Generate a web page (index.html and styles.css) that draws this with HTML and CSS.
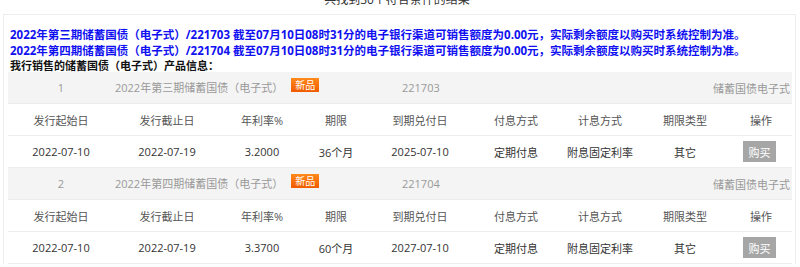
FILE: index.html
```html
<!DOCTYPE html>
<html lang="zh-CN">
<head>
<meta charset="utf-8">
<link rel="stylesheet" href="styles.css">
</head>
<body>
<div class="result-count">共找到30个符合条件的结果</div>
<div class="panel">
  <p class="notice">2022年第三期储蓄国债（电子式）/221703 截至07月10日08时31分的电子银行渠道可销售额度为0.00元，实际剩余额度以购买时系统控制为准。</p>
  <p class="notice">2022年第四期储蓄国债（电子式）/221704 截至07月10日08时31分的电子银行渠道可销售额度为0.00元，实际剩余额度以购买时系统控制为准。</p>
  <p class="title">我行销售的储蓄国债（电子式）产品信息：</p>

  <div class="product">
    <div class="prod-head">
      <span class="c-no">1</span>
      <span class="c-name">2022年第三期储蓄国债（电子式）<span class="badge">新品</span></span>
      <span class="c-code">221703</span>
      <span class="c-type">储蓄国债电子式</span>
    </div>
    <div class="row th">
      <span>发行起始日</span><span>发行截止日</span><span>年利率%</span><span>期限</span><span>到期兑付日</span><span>付息方式</span><span>计息方式</span><span>期限类型</span><span>操作</span>
    </div>
    <div class="row td">
      <span>2022-07-10</span><span>2022-07-19</span><span>3.2000</span><span>36个月</span><span>2025-07-10</span><span>定期付息</span><span>附息固定利率</span><span>其它</span><span><button class="buy" type="button">购买</button></span>
    </div>
  </div>

  <div class="product">
    <div class="prod-head">
      <span class="c-no">2</span>
      <span class="c-name">2022年第四期储蓄国债（电子式）<span class="badge">新品</span></span>
      <span class="c-code">221704</span>
      <span class="c-type">储蓄国债电子式</span>
    </div>
    <div class="row th">
      <span>发行起始日</span><span>发行截止日</span><span>年利率%</span><span>期限</span><span>到期兑付日</span><span>付息方式</span><span>计息方式</span><span>期限类型</span><span>操作</span>
    </div>
    <div class="row td">
      <span>2022-07-10</span><span>2022-07-19</span><span>3.3700</span><span>60个月</span><span>2027-07-10</span><span>定期付息</span><span>附息固定利率</span><span>其它</span><span><button class="buy" type="button">购买</button></span>
    </div>
  </div>
</div>
</body>
</html>
```

FILE: styles.css
```css
html, body {
  margin: 0;
  padding: 0;
  background: #fff;
}
body {
  font-family: "Open Sans", "Noto Sans CJK SC", sans-serif;
  font-size: 11px;
  color: #333;
  overflow: hidden;
}
.result-count {
  text-align: center;
  height: 14px;
  line-height: 12px;
  margin-top: -6px;
  margin-bottom: 6px;
  font-size: 12px;
  color: #333;
  padding-right: 6px;
}
.panel {
  margin-left: 3px;
  width: 793px;
  border: 1px solid #ededed;
  border-bottom: none;
  padding: 12px 3px 0 4px;
  box-sizing: border-box;
}
.notice {
  margin: 0;
  padding-left: 2px;
  font-weight: bold;
  font-size: 11.5px;
  color: #1010f0;
  line-height: 16px;
  white-space: nowrap;
}
.title {
  margin: 0;
  padding-left: 2px;
  font-weight: bold;
  color: #111;
  line-height: 13px;
}
.prod-head {
  display: grid;
  grid-template-columns: 106px 288px 1fr auto;
  align-items: center;
  height: 32px;
  background: #f4f4f4;
  color: #999;
  border-bottom: 1px solid #ececec;
  box-sizing: border-box;
}
.c-no { text-align: center; }
.c-name {
  display: flex;
  align-items: center;
  padding-left: 1px;
  margin-top: -2px;
}
.c-type { padding-right: 2px; }
.badge {
  display: inline-block;
  margin-left: 8px;
  margin-top: -3px;
  width: 28px;
  height: 14px;
  line-height: 14px;
  text-align: center;
  font-size: 10px;
  color: #fff;
  background: linear-gradient(#ff8a1a, #f05a00);
}
.row {
  display: grid;
  grid-template-columns: 106px 106px 84px 64px 104px 88px 80px 90px 1fr;
  align-items: center;
  height: 32px;
  border-bottom: 1px solid #eeeeee;
  box-sizing: border-box;
  text-align: center;
}
.th { color: #555; }
.td { color: #333; }
.buy {
  width: 33px;
  height: 21px;
  padding: 0;
  border: none;
  background: #a6a6a6;
  color: #fff;
  font-family: inherit;
  font-size: 11px;
  vertical-align: middle;
  margin-right: 3px;
}
```
